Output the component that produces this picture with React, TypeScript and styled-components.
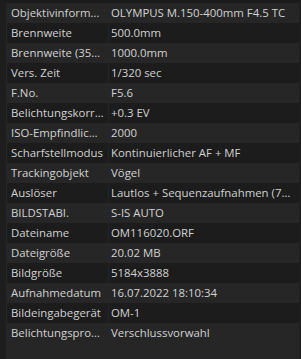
import React from "react";
import styled, { createGlobalStyle } from "styled-components";

const GlobalStyle = createGlobalStyle`
  html, body {
    margin: 0;
    padding: 0;
    background: #262626;
  }
`;

const rows: [string, string][] = [
  ["Objektivinformation", "OLYMPUS M.150-400mm F4.5 TC"],
  ["Brennweite", "500.0mm"],
  ["Brennweite (35mm)", "1000.0mm"],
  ["Vers. Zeit", "1/320 sec"],
  ["F.No.", "F5.6"],
  ["Belichtungskorrektur", "+0.3 EV"],
  ["ISO-Empfindlichkeit", "2000"],
  ["Scharfstellmodus", "Kontinuierlicher AF + MF"],
  ["Trackingobjekt", "Vögel"],
  ["Auslöser", "Lautlos + Sequenzaufnahmen (7,5 Bilder/s)"],
  ["BILDSTABI.", "S-IS AUTO"],
  ["Dateiname", "OM116020.ORF"],
  ["Dateigröße", "20.02 MB"],
  ["Bildgröße", "5184x3888"],
  ["Aufnahmedatum", "16.07.2022 18:10:34"],
  ["Bildeingabegerät", "OM-1"],
  ["Belichtungsprogramm", "Verschlussvorwahl"],
];

const Panel = styled.div`
  display: flex;
  width: 301px;
  height: 359px;
  background: #262626;
  font-family: "Open Sans", "Noto Sans", sans-serif;
  font-size: 11.4px;
  color: #d2d2d2;
  overflow: hidden;
`;

const Gutter = styled.div`
  width: 6px;
  flex: none;
  background: #1d1d1d;
`;

const Body = styled.div`
  flex: 1;
  display: flex;
  flex-direction: column;
`;

const TopEdge = styled.div`
  height: 3px;
  background: #1b1b1b;
`;

const Table = styled.div`
  display: grid;
  grid-template-columns: 101px 190px;
  column-gap: 1px;
  padding-left: 1px;
`;

const Cell = styled.div<{ $shade: boolean; $key?: boolean }>`
  height: 20px;
  line-height: 20px;
  padding: 0 ${(p) => (p.$key ? "4px" : "6px")} 0 ${(p) => (p.$key ? "4px" : "2px")};
  background: ${(p) => (p.$shade ? "#1c1c1c" : "transparent")};
  white-space: nowrap;
  overflow: hidden;
  text-overflow: ellipsis;
`;

const ScrollEdge = styled.div`
  width: 2px;
  flex: none;
  background: #1e1e1e;
`;

export default function App() {
  return (
    <>
      <GlobalStyle />
      <Panel>
        <Gutter />
        <Body>
          <TopEdge />
          <Table>
            {rows.map(([label, value], i) => (
              <React.Fragment key={label}>
                <Cell $shade={i % 2 === 1} $key>
                  {label}
                </Cell>
                <Cell $shade={i % 2 === 1}>{value}</Cell>
              </React.Fragment>
            ))}
          </Table>
        </Body>
        <ScrollEdge />
      </Panel>
    </>
  );
}
